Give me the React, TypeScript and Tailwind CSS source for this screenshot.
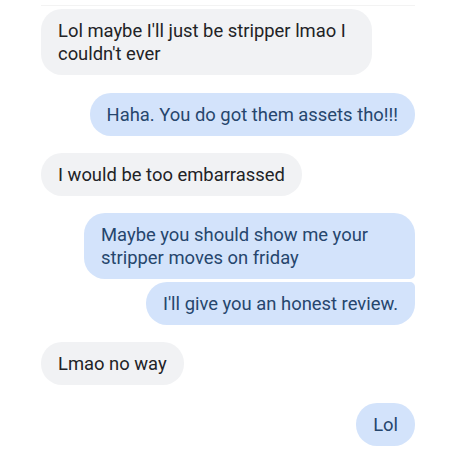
const messages: { text: string; mine: boolean; shape?: string; gap: string }[] = [
  { text: "Lol maybe I'll just be stripper lmao I couldn't ever", mine: false, gap: 'mt-[3px]' },
  { text: 'Haha. You do got them assets tho!!!', mine: true, gap: 'mt-[18px]' },
  { text: 'I would be too embarrassed', mine: false, gap: 'mt-[17px]' },
  { text: 'Maybe you should show me your stripper moves on friday', mine: true, shape: 'rounded-br-[5px]', gap: 'mt-[17px]' },
  { text: "I'll give you an honest review.", mine: true, shape: 'rounded-tr-[5px]', gap: 'mt-[3px]' },
  { text: 'Lmao no way', mine: false, gap: 'mt-[17px]' },
  { text: 'Lol', mine: true, gap: 'mt-[18px]' },
];

export default function App() {
  return (
    <div className="h-[450px] w-[450px] overflow-hidden bg-white pl-[41px] pr-[35px] pt-[5px]" style={{ fontFamily: 'Roboto, "Noto Sans", sans-serif' }}>
      <div className="h-px bg-[#f3f3f3]" />
      <div className="flex flex-col">
        {messages.map((m, i) => (
          <div
            key={i}
            className={`${m.gap} max-w-[331px] rounded-[21px] px-[17px] py-[10px] text-[18.4px] leading-[23px] ${m.shape ?? ''} ${
              m.mine ? 'self-end bg-[#d3e3fb] text-[#26466d]' : 'self-start bg-[#f1f2f4] text-[#222326]'
            }`}
          >
            {m.text}
          </div>
        ))}
      </div>
    </div>
  );
}
